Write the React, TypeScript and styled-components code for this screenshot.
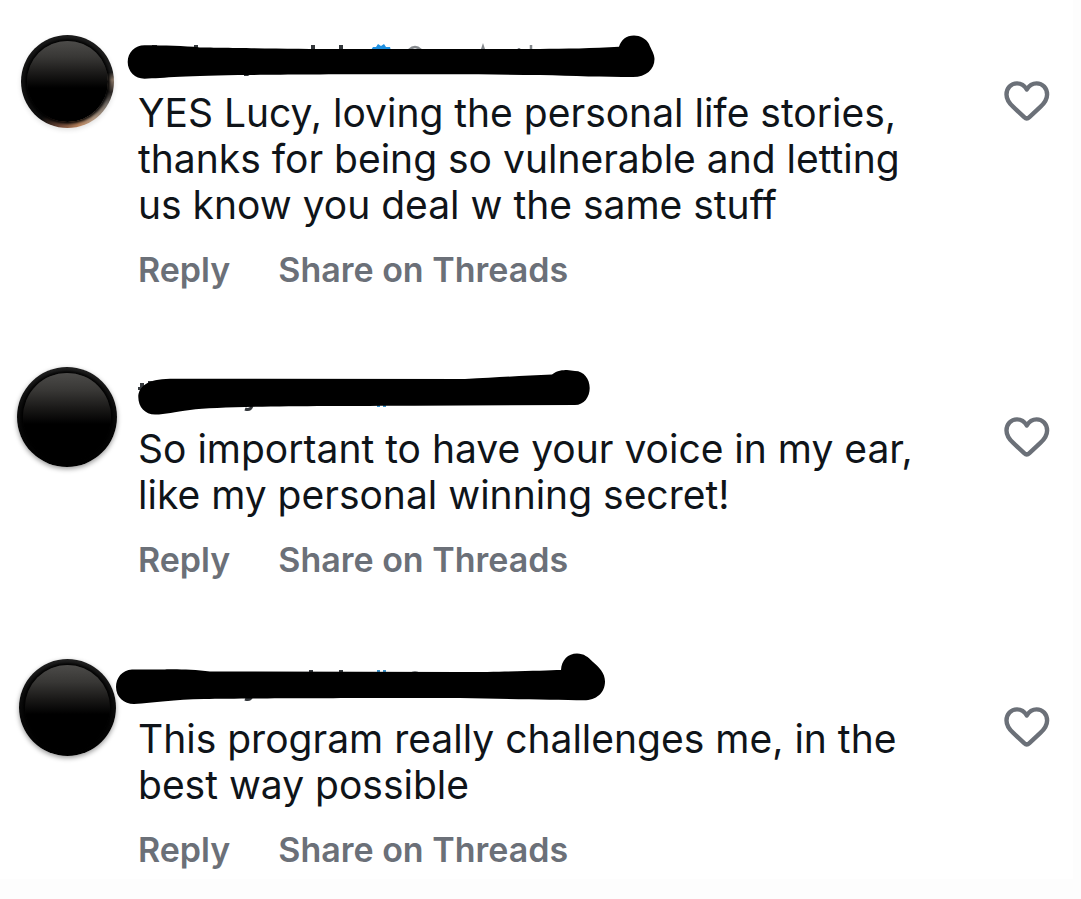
import React from "react";
import styled, { createGlobalStyle } from "styled-components";

const GlobalStyle = createGlobalStyle`
  * { box-sizing: border-box; }
  body {
    margin: 0;
    background: #fdfdfd;
    color: #0f1419;
    font-family: Inter, "Liberation Sans", sans-serif;
  }
`;

const Page = styled.div`
  padding-right: 8px;
`;

const Thread = styled.main`
  display: flex;
  flex-direction: column;
  gap: 75px;
  padding: 30px 23px 8px 18px;
  background: #ffffff;
`;

const CommentRow = styled.article`
  display: flex;
  align-items: flex-start;
  gap: 22px;
`;

const AvatarCell = styled.div`
  flex: none;
  display: flex;
  align-items: center;
  justify-content: center;
  width: 98px;
  height: 102px;
`;

const Avatar = styled.div<{ $size: number; $glint?: boolean }>`
  flex: none;
  display: flex;
  width: ${(p) => p.$size}px;
  height: ${(p) => p.$size}px;
  padding: 6px;
  border-radius: 50%;
  background: ${(p) =>
    p.$glint
      ? "conic-gradient(#1c1c1c 0deg 78deg, #8a7767 88deg, #2a2624 104deg, #77706a 120deg, #b39a84 145deg, #b9855f 165deg, #6d4737 190deg, #0c0c0c 215deg, #1c1c1c 360deg)"
      : "linear-gradient(#202020, #0c0c0c 40%, #000000)"};
  box-shadow: 0 2px 5px rgba(0, 0, 0, ${(p) => (p.$glint ? 0.12 : 0.4)});
`;

const AvatarFace = styled.div`
  flex: 1;
  border-radius: 50%;
  background: linear-gradient(#4c4b49, #383735 20%, #1a1918 40%, #000000 58%);
  box-shadow: 0 0 3px 2px #000000;
`;

const Body = styled.div`
  flex: 1;
  min-width: 0;
`;

const Author = styled.header`
  height: 60px;
  margin-left: -24px;
`;

const Redaction = styled.svg`
  display: block;
  overflow: visible;
`;

const Message = styled.p`
  max-width: 800px;
  margin: 0 0 21px;
  font-size: 39px;
  line-height: 46px;
`;

const Actions = styled.div`
  display: flex;
  gap: 48px;
`;

const ActionButton = styled.button`
  padding: 0;
  border: 0;
  background: none;
  color: #6b7078;
  font: 600 34px/42px Inter, "Liberation Sans", sans-serif;
  cursor: pointer;
`;

const LikeButton = styled.button`
  flex: none;
  display: flex;
  margin-top: 51px;
  padding: 0;
  border: 0;
  background: none;
  cursor: pointer;
`;

const Heart = () => (
  <svg width="46" height="42" viewBox="0 0 46 42" fill="none" stroke="#6b7078" strokeWidth="4.4" strokeLinejoin="round" aria-hidden="true">
    <path d="M22.8 8.5C20.5 4.6 17 2.4 13 2.4C7 2.4 2.5 7.2 2.5 13.5C2.5 19 5.5 22.6 9.5 26.2L20.2 36.2Q22.8 38.6 25.4 36.2L36.1 26.2C40.1 22.6 43.1 19 43.1 13.5C43.1 7.2 38.6 2.4 32.6 2.4C28.6 2.4 25.1 4.6 22.8 8.5Z" />
  </svg>
);

interface Comment {
  lines: string[];
  avatar: number;
  glint?: boolean;
  name: React.ReactNode;
}

const comments: Comment[] = [
  {
    lines: ["YES Lucy, loving the personal life stories,", "thanks for being so vulnerable and letting", "us know you deal w the same stuff"],
    avatar: 93,
    glint: true,
    name: (
      <>
        <path fill="#33373b" d="M38 15h5v4h-5zM80 15h4v5h-4zM197 15h4v6h-4zM225 15h4v6h-4zM130 44h7l-3 2h-4z" />
        <path fill="#1d8fe0" d="M257 20l2-3 3 0 2-3 3 2 3-2 2 3 4 0 1 4z" />
        <path fill="none" stroke="#85898d" strokeWidth="2.5" d="M295 20q6-6 12 0M368 20l1-3l1 3M405 20v-2M417 20v-5" />
        <path d="M30.500 15.300C21 15.300 13.700 22.500 13.700 32S21 48.700 30.500 48.700C50 48 70 45.500 136 45C200 44 330 44 426 45C460 46 490 47 519 47C532 47 540.500 39.500 540.500 29C540.500 24 537 19 535 14C532 8.500 526 5.500 520 5.500C512 5.500 507 10 505 16.800C480 18.500 450 18.700 426 19L226 19C180 19 100 17.400 86 17.400C70 16 50 15.300 30.500 15.300Z" />
      </>
    ),
  },
  {
    lines: ["So important to have your voice in my ear,", "like my personal winning secret!"],
    avatar: 100,
    name: (
      <g transform="translate(0 -1)">
        <path fill="#33373b" d="M24 22h2v-4h4v4h3v3h-9zM34 16h4v4h-4z" />
        <path fill="none" stroke="#33373b" strokeWidth="3" d="M131 44q5 2 7-3" />
        <path fill="#3b94cc" d="M263 40h3v2h-3zM269 40h3v2h-3z" />
        <path d="M24.300 32C24.300 22 33 14 56 13.700L351 14C385 12.500 410 10.500 438 9.500C443 5.500 449 5 453 5L461 6C470 6 475.700 14 475.700 23S470 40 461 40L300 40.700C200 41 110 41 76 45C60 47 52 49.500 41 49.500C31 49.500 24.300 42 24.300 32Z" />
      </g>
    ),
  },
  {
    lines: ["This program really challenges me, in the", "best way possible"],
    avatar: 97,
    name: (
      <g transform="translate(0 -1)">
        <path fill="#33373b" d="M195 15h4v4h-4zM225 15h4v4h-4z" />
        <path fill="none" stroke="#33373b" strokeWidth="3" d="M131 44q5 2 7-3" />
        <path fill="#3b94cc" d="M263 15h3v3h-3zM269 15h3v3h-3z" />
        <path fill="#85898d" d="M296 18q5-4 10 0z" />
        <path d="M18 14.500C8 15 2 23 2 32C2 42 10 49 20 49C40 48 60 44.500 90 44C150 43 300 43 346 43C390 44 440 45 470 45.300C482 45.300 491 38 491 26.500C491 18 485 12 479 7C474 2 470-1.500 463-1.500C454-1.500 447.500 5 447 15C430 15.300 400 17 346 17L96 16.500C80 14.500 60 14 51 14.500Z" />
      </g>
    ),
  },
];

export default function App() {
  return (
    <Page>
      <GlobalStyle />
      <Thread>
        {comments.map((comment) => (
          <CommentRow key={comment.lines[0]}>
            <AvatarCell>
              <Avatar $size={comment.avatar} $glint={comment.glint}>
                <AvatarFace />
              </Avatar>
            </AvatarCell>
            <Body>
              <Author>
                <Redaction width="560" height="60" viewBox="0 0 560 60" role="img" aria-label="Redacted author">
                  {comment.name}
                </Redaction>
              </Author>
              <Message>
                {comment.lines.map((line, i) => (
                  <React.Fragment key={line}>
                    {i > 0 && <br />}
                    {line}
                  </React.Fragment>
                ))}
              </Message>
              <Actions>
                <ActionButton type="button">Reply</ActionButton>
                <ActionButton type="button">Share on Threads</ActionButton>
              </Actions>
            </Body>
            <LikeButton type="button" aria-label="Like">
              <Heart />
            </LikeButton>
          </CommentRow>
        ))}
      </Thread>
    </Page>
  );
}
